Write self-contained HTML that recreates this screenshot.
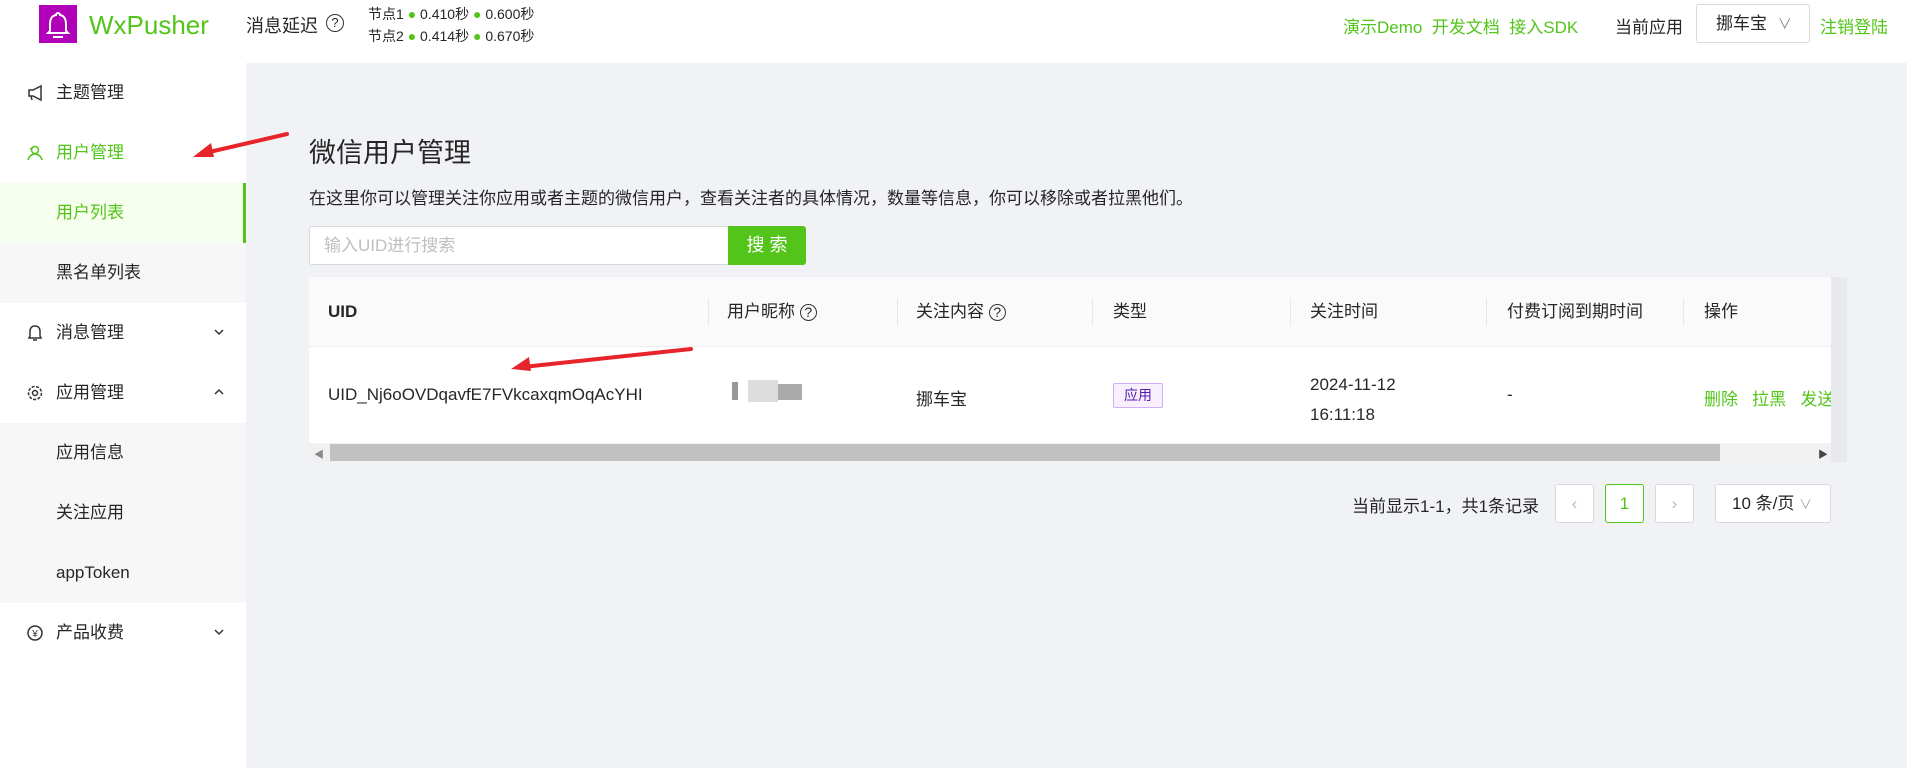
<!DOCTYPE html>
<html><head><meta charset="utf-8"><style>
*{box-sizing:border-box;margin:0;padding:0}
body{width:1907px;height:768px;overflow:hidden;background:#f0f2f5;font-family:"Liberation Sans","Noto Sans CJK SC",sans-serif;color:#262626;font-size:17px;position:relative}
.abs{position:absolute;white-space:nowrap}
.hdr{position:absolute;left:0;top:0;width:1907px;height:63px;background:#fff}
.side{position:absolute;left:0;top:63px;width:246px;height:705px;background:#fff}
.mi{position:absolute;left:0;width:246px;height:60px;line-height:60px;padding-left:56px;font-size:17px}
.sub{background:#f7f7f7}
.g{color:#52c41a}
.ico{position:absolute;left:26px;top:21px;width:18px;height:18px}
.chev{position:absolute;right:22px;top:24px;width:10px;height:10px}
.th{position:absolute;top:277px;height:70px;line-height:70px;font-size:17px;white-space:nowrap}
.sep{position:absolute;top:298px;width:1px;height:28px;background:#e8e8e8}
.td{position:absolute;font-size:17px;white-space:nowrap}
.pb{position:absolute;top:484px;height:39px;width:39px;border:1px solid #d9d9d9;background:#fff;border-radius:3px;text-align:center;line-height:37px;color:#bbb}
</style></head><body>
<div class="hdr"></div>
<div class="abs" style="left:39px;top:5px;width:38px;height:38px;background:#b000b8"></div>
<svg class="abs" style="left:39px;top:5px" width="38" height="38" viewBox="0 0 38 38"><path d="M19 8a2 2 0 0 1 2 2c5 1 6 5 6 10v6l2 2H9l2-2v-6c0-5 1-9 6-10a2 2 0 0 1 2-2z" fill="none" stroke="#fff" stroke-width="2"/><path d="M14 32h10" stroke="#fff" stroke-width="2"/></svg>
<div class="abs g" style="left:89px;top:10px;font-size:26px">WxPusher</div>
<div class="abs" style="left:246px;top:12px;font-size:18px">消息延迟</div>
<div class="abs" style="left:326px;top:14px;width:18px;height:18px;border:1.5px solid #333;border-radius:50%;font-size:13px;text-align:center;line-height:15px">?</div>
<div class="abs" style="left:368px;top:3px;font-size:14px;line-height:22px">节点1 <span class="g">●</span> 0.410秒 <span class="g">●</span> 0.600秒<br>节点2 <span class="g">●</span> 0.414秒 <span class="g">●</span> 0.670秒</div>
<div class="abs g" style="left:1343px;top:13px;font-size:17px">演示Demo&nbsp; 开发文档&nbsp; 接入SDK</div>
<div class="abs" style="left:1615px;top:13px;font-size:17px">当前应用</div>
<div class="abs" style="left:1696px;top:4px;width:114px;height:39px;border:1px solid #d9d9d9;border-radius:3px;padding-left:19px;line-height:37px;font-size:17px">挪车宝 <span style="color:#888;font-size:14px;margin-left:6px">∨</span></div>
<div class="abs g" style="left:1820px;top:13px;font-size:17px">注销登陆</div>

<div class="side"></div>
<div class="mi" style="top:63px">主题管理<svg class="ico" viewBox="0 0 18 18"><path d="M3 6h4l8-4v14l-8-4H3z M5 12l1 4" fill="none" stroke="#333" stroke-width="1.5"/></svg></div>
<div class="mi g" style="top:123px">用户管理<svg class="ico" viewBox="0 0 18 18"><circle cx="9" cy="6" r="3.5" fill="none" stroke="#52c41a" stroke-width="1.5"/><path d="M2 16c1-4 4-6 7-6s6 2 7 6M6 4l-2 1" fill="none" stroke="#52c41a" stroke-width="1.5"/></svg></div>
<div class="mi" style="top:183px;background:#f6ffed;color:#52c41a;border-right:3px solid #52c41a">用户列表</div>
<div class="mi sub" style="top:243px">黑名单列表</div>
<div class="mi" style="top:303px">消息管理<svg class="ico" viewBox="0 0 18 18"><path d="M9 2c-3 0-5 2-5 5v5l-1 2h12l-1-2V7c0-3-2-5-5-5zM7 16h4" fill="none" stroke="#333" stroke-width="1.5"/></svg><svg class="chev" viewBox="0 0 10 10"><path d="M1 3l4 4 4-4" fill="none" stroke="#333" stroke-width="1.5"/></svg></div>
<div class="mi" style="top:363px">应用管理<svg class="ico" viewBox="0 0 18 18"><circle cx="9" cy="9" r="2.5" fill="none" stroke="#333" stroke-width="1.5"/><circle cx="9" cy="9" r="6.5" fill="none" stroke="#333" stroke-width="1.5" stroke-dasharray="3 1.5"/></svg><svg class="chev" viewBox="0 0 10 10"><path d="M1 7l4-4 4 4" fill="none" stroke="#333" stroke-width="1.5"/></svg></div>
<div class="mi sub" style="top:423px">应用信息</div>
<div class="mi sub" style="top:483px">关注应用</div>
<div class="mi sub" style="top:543px">appToken</div>
<div class="mi" style="top:603px">产品收费<svg class="ico" viewBox="0 0 18 18"><circle cx="9" cy="9" r="7" fill="none" stroke="#333" stroke-width="1.5"/><text x="9" y="13" font-size="10" text-anchor="middle" fill="#333">¥</text></svg><svg class="chev" viewBox="0 0 10 10"><path d="M1 3l4 4 4-4" fill="none" stroke="#333" stroke-width="1.5"/></svg></div>

<div class="abs" style="left:309px;top:131px;font-size:27px">微信用户管理</div>
<div class="abs" style="left:309px;top:184px;font-size:17px">在这里你可以管理关注你应用或者主题的微信用户，查看关注者的具体情况，数量等信息，你可以移除或者拉黑他们。</div>
<div class="abs" style="left:309px;top:226px;width:420px;height:39px;background:#fff;border:1px solid #d9d9d9;border-radius:3px 0 0 3px;padding-left:14px;line-height:37px;color:#bfbfbf;font-size:17px">输入UID进行搜索</div>
<div class="abs" style="left:728px;top:226px;width:78px;height:39px;background:#52c41a;color:#fff;text-align:center;line-height:39px;font-size:18px;border-radius:0 3px 3px 0">搜 索</div>

<div class="abs" style="left:309px;top:277px;width:1522px;height:185px;background:#fff"></div>
<div class="abs" style="left:309px;top:277px;width:1522px;height:70px;background:#fafafa;border-bottom:1px solid #eee"></div>
<div class="abs" style="left:1831px;top:277px;width:16px;height:185px;background:#e8e9ec"></div>
<div class="th" style="left:328px;font-weight:bold">UID</div>
<div class="sep" style="left:708px"></div><div class="th" style="left:727px">用户昵称 <span style="font-size:14px;border:1.3px solid #333;border-radius:50%;display:inline-block;width:17px;height:17px;line-height:14px;text-align:center">?</span></div>
<div class="sep" style="left:897px"></div><div class="th" style="left:916px">关注内容 <span style="font-size:14px;border:1.3px solid #333;border-radius:50%;display:inline-block;width:17px;height:17px;line-height:14px;text-align:center">?</span></div>
<div class="sep" style="left:1092px"></div><div class="th" style="left:1113px">类型</div>
<div class="sep" style="left:1290px"></div><div class="th" style="left:1310px">关注时间</div>
<div class="sep" style="left:1486px"></div><div class="th" style="left:1507px">付费订阅到期时间</div>
<div class="sep" style="left:1683px"></div><div class="th" style="left:1704px">操作</div>
<div class="td" style="left:328px;top:385px">UID_Nj6oOVDqavfE7FVkcaxqmOqAcYHI</div>
<div class="abs" style="left:732px;top:382px;width:6px;height:18px;background:#999"></div>
<div class="abs" style="left:748px;top:380px;width:30px;height:22px;background:#ddd"></div>
<div class="abs" style="left:778px;top:384px;width:24px;height:16px;background:#aaa"></div>
<div class="td" style="left:916px;top:385px">挪车宝</div>
<div class="abs" style="left:1113px;top:383px;width:50px;height:25px;border:1px solid #d3adf7;background:#f9f0ff;color:#531dab;font-size:14px;text-align:center;line-height:23px;border-radius:2px">应用</div>
<div class="td" style="left:1310px;top:370px;line-height:30px">2024-11-12<br>16:11:18</div>
<div class="td" style="left:1507px;top:385px">-</div>
<div class="td g" style="left:1704px;top:385px;width:127px;overflow:hidden">删除&nbsp;&nbsp; 拉黑&nbsp;&nbsp; 发送</div>
<div class="abs" style="left:309px;top:443px;width:1522px;height:19px;background:#f1f1f1"></div>
<div class="abs" style="left:330px;top:444px;width:1390px;height:17px;background:#c1c1c1"></div>
<div class="abs" style="left:314px;top:446px;font-size:10px;color:#888">◀</div>
<div class="abs" style="left:1818px;top:446px;font-size:10px;color:#444">▶</div>

<div class="abs" style="left:1352px;top:492px;font-size:17px">当前显示1-1，共1条记录</div>
<div class="pb" style="left:1555px">‹</div>
<div class="pb" style="left:1605px;border-color:#52c41a;color:#52c41a">1</div>
<div class="pb" style="left:1655px">›</div>
<div class="abs" style="left:1715px;top:484px;width:116px;height:39px;border:1px solid #d9d9d9;background:#fff;border-radius:3px;padding-left:16px;line-height:37px;font-size:17px">10 条/页 <span style="color:#aaa;font-size:13px">∨</span></div>

<svg class="abs" style="left:0;top:0" width="1907" height="768"><g stroke="#e8242b" stroke-width="4" stroke-linecap="round"><line x1="287" y1="134" x2="205" y2="153"/><line x1="691" y1="349" x2="523" y2="367"/></g><g fill="#e8242b"><path d="M193 157l18-14 3 14z"/><path d="M511 369l18-12 2 14z"/></g></svg>
</body></html>
